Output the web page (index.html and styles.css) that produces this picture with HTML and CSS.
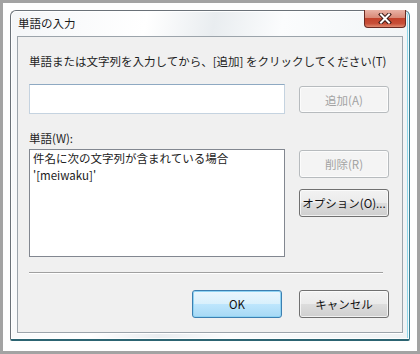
FILE: index.html
```html
<!DOCTYPE html>
<html lang="ja">
<head>
<meta charset="utf-8">
<link rel="stylesheet" href="styles.css">
</head>
<body>
<div class="screen">
  <div class="window">
    <div class="titlebar">
      <span class="title">単語の入力</span>
      <div class="close">
        <svg width="14" height="11" viewBox="0 0 14 11">
          <path d="M3 1.5 L11 9.5 M11 1.5 L3 9.5" stroke="#3a1a16" stroke-width="4" stroke-linecap="square"/>
          <path d="M3 1.5 L11 9.5 M11 1.5 L3 9.5" stroke="#ffffff" stroke-width="2" stroke-linecap="square"/>
        </svg>
      </div>
    </div>
    <div class="client">
      <div class="prompt">単語または文字列を入力してから、[追加] をクリックしてください(T)</div>
      <div class="row row-input">
        <div class="textbox"></div>
        <div class="btn disabled btn-add">追加(A)</div>
      </div>
      <div class="label">単語(W):</div>
      <div class="row row-list">
        <div class="listbox">
          <div>件名に次の文字列が含まれている場合</div>
          <div>'[meiwaku]'</div>
        </div>
        <div class="side">
          <div class="btn disabled">削除(R)</div>
          <div class="btn">オプション(O)...</div>
        </div>
      </div>
      <div class="separator"></div>
      <div class="footer">
        <div class="btn default">OK</div>
        <div class="btn">キャンセル</div>
      </div>
    </div>
  </div>
</div>
</body>
</html>
```

FILE: styles.css
```css
html, body {
  margin: 0;
  padding: 0;
  background: #ffffff;
}

.screen {
  width: 420px;
  height: 354px;
  box-sizing: border-box;
  border: 3px solid #a3a3a3;
  background: #ffffff;
  padding: 7px 7px 10px 7px;
  font-family: "Noto Sans CJK JP", "Noto Sans", sans-serif;
  color: #1e1e1e;
}

.window {
  width: 400px;
  height: 331px;
  box-sizing: border-box;
  border: 1px solid #6a7178;
  border-right-color: #3c7d90;
  border-bottom: 2px solid #2c6472;
  border-radius: 6px 6px 2px 2px;
  background: linear-gradient(100deg, #f4f6f8 0%, #ffffff 30%, #e9edf0 45%, #fbfcfd 60%, #eef2f4 100%);
  box-shadow: inset 0 0 0 1px rgba(255,255,255,0.9), inset -2px 0 0 #8fd6ea;
  padding: 0 6px 6px 6px;
  display: flex;
  flex-direction: column;
}

.titlebar {
  height: 25px;
  display: flex;
  justify-content: space-between;
  align-items: flex-start;
  flex-shrink: 0;
}

.title {
  font-size: 11.5px;
  line-height: 16px;
  margin-top: 4px;
  padding-left: 1px;
  color: #1a1a1a;
}

.close {
  width: 42px;
  height: 18px;
  box-sizing: border-box;
  margin-right: -3px;
  margin-top: -1px;
  border: 1px solid #6a2a22;
  border-top: none;
  border-radius: 0 0 4px 4px;
  background: linear-gradient(#e9b3a6 0%, #d98a78 45%, #c2432c 50%, #c84f38 80%, #e08a70 100%);
  display: flex;
  align-items: center;
  justify-content: center;
}

.client {
  flex: 1;
  box-sizing: border-box;
  border: 1px solid #9ca4ab;
  background: #f0f0f0;
  box-shadow: 0 1px 0 #ffffff;
  padding: 16px 0 0 11px;
  display: flex;
  flex-direction: column;
  font-size: 11.5px;
}

.prompt {
  line-height: 16px;
}

.row {
  display: flex;
  gap: 14px;
}

.row-input {
  margin-top: 15px;
}

.textbox {
  width: 256px;
  height: 30px;
  box-sizing: border-box;
  background: #ffffff;
  border: 1px solid #c5d3e0;
  border-top-color: #8ea9c2;
}

.btn {
  width: 90px;
  height: 27px;
  box-sizing: border-box;
  border: 1px solid #707070;
  border-radius: 3px;
  background: linear-gradient(#f2f2f2 0%, #ebebeb 49%, #dddddd 50%, #cfcfcf 100%);
  box-shadow: inset 0 0 0 1px rgba(255,255,255,0.7);
  display: flex;
  align-items: center;
  justify-content: center;
  font-size: 11.5px;
  color: #111;
  white-space: nowrap;
}

.btn.disabled {
  border-color: #b7bbbe;
  background: #f4f4f4;
  color: #a3a3a3;
}

.btn.default {
  border-color: #3c7fb1;
  background: linear-gradient(#eaf6fd 0%, #d9f0fc 49%, #bee6fd 50%, #a7d9f5 100%);
  box-shadow: inset 0 0 0 1px #8fd3f3;
}

.btn-add {
  margin-top: 2px;
}

.label {
  line-height: 16px;
  margin-top: 16px;
}

.row-list {
  margin-top: 3px;
}

.listbox {
  width: 256px;
  height: 108px;
  box-sizing: border-box;
  background: #ffffff;
  border: 1px solid #828790;
  padding: 0 0 0 3px;
  line-height: 17px;
  color: #222;
}

.side {
  display: flex;
  flex-direction: column;
  gap: 11px;
  padding-top: 1px;
}

.side .btn {
  height: 28px;
}

.separator {
  width: 354px;
  height: 1px;
  margin-top: 15px;
  background: #a0a0a0;
  box-shadow: 0 1px 0 #ffffff;
}

.footer {
  display: flex;
  gap: 17px;
  justify-content: flex-end;
  width: 360px;
  margin-top: 17px;
}

.footer .btn {
  height: 28px;
}
```
